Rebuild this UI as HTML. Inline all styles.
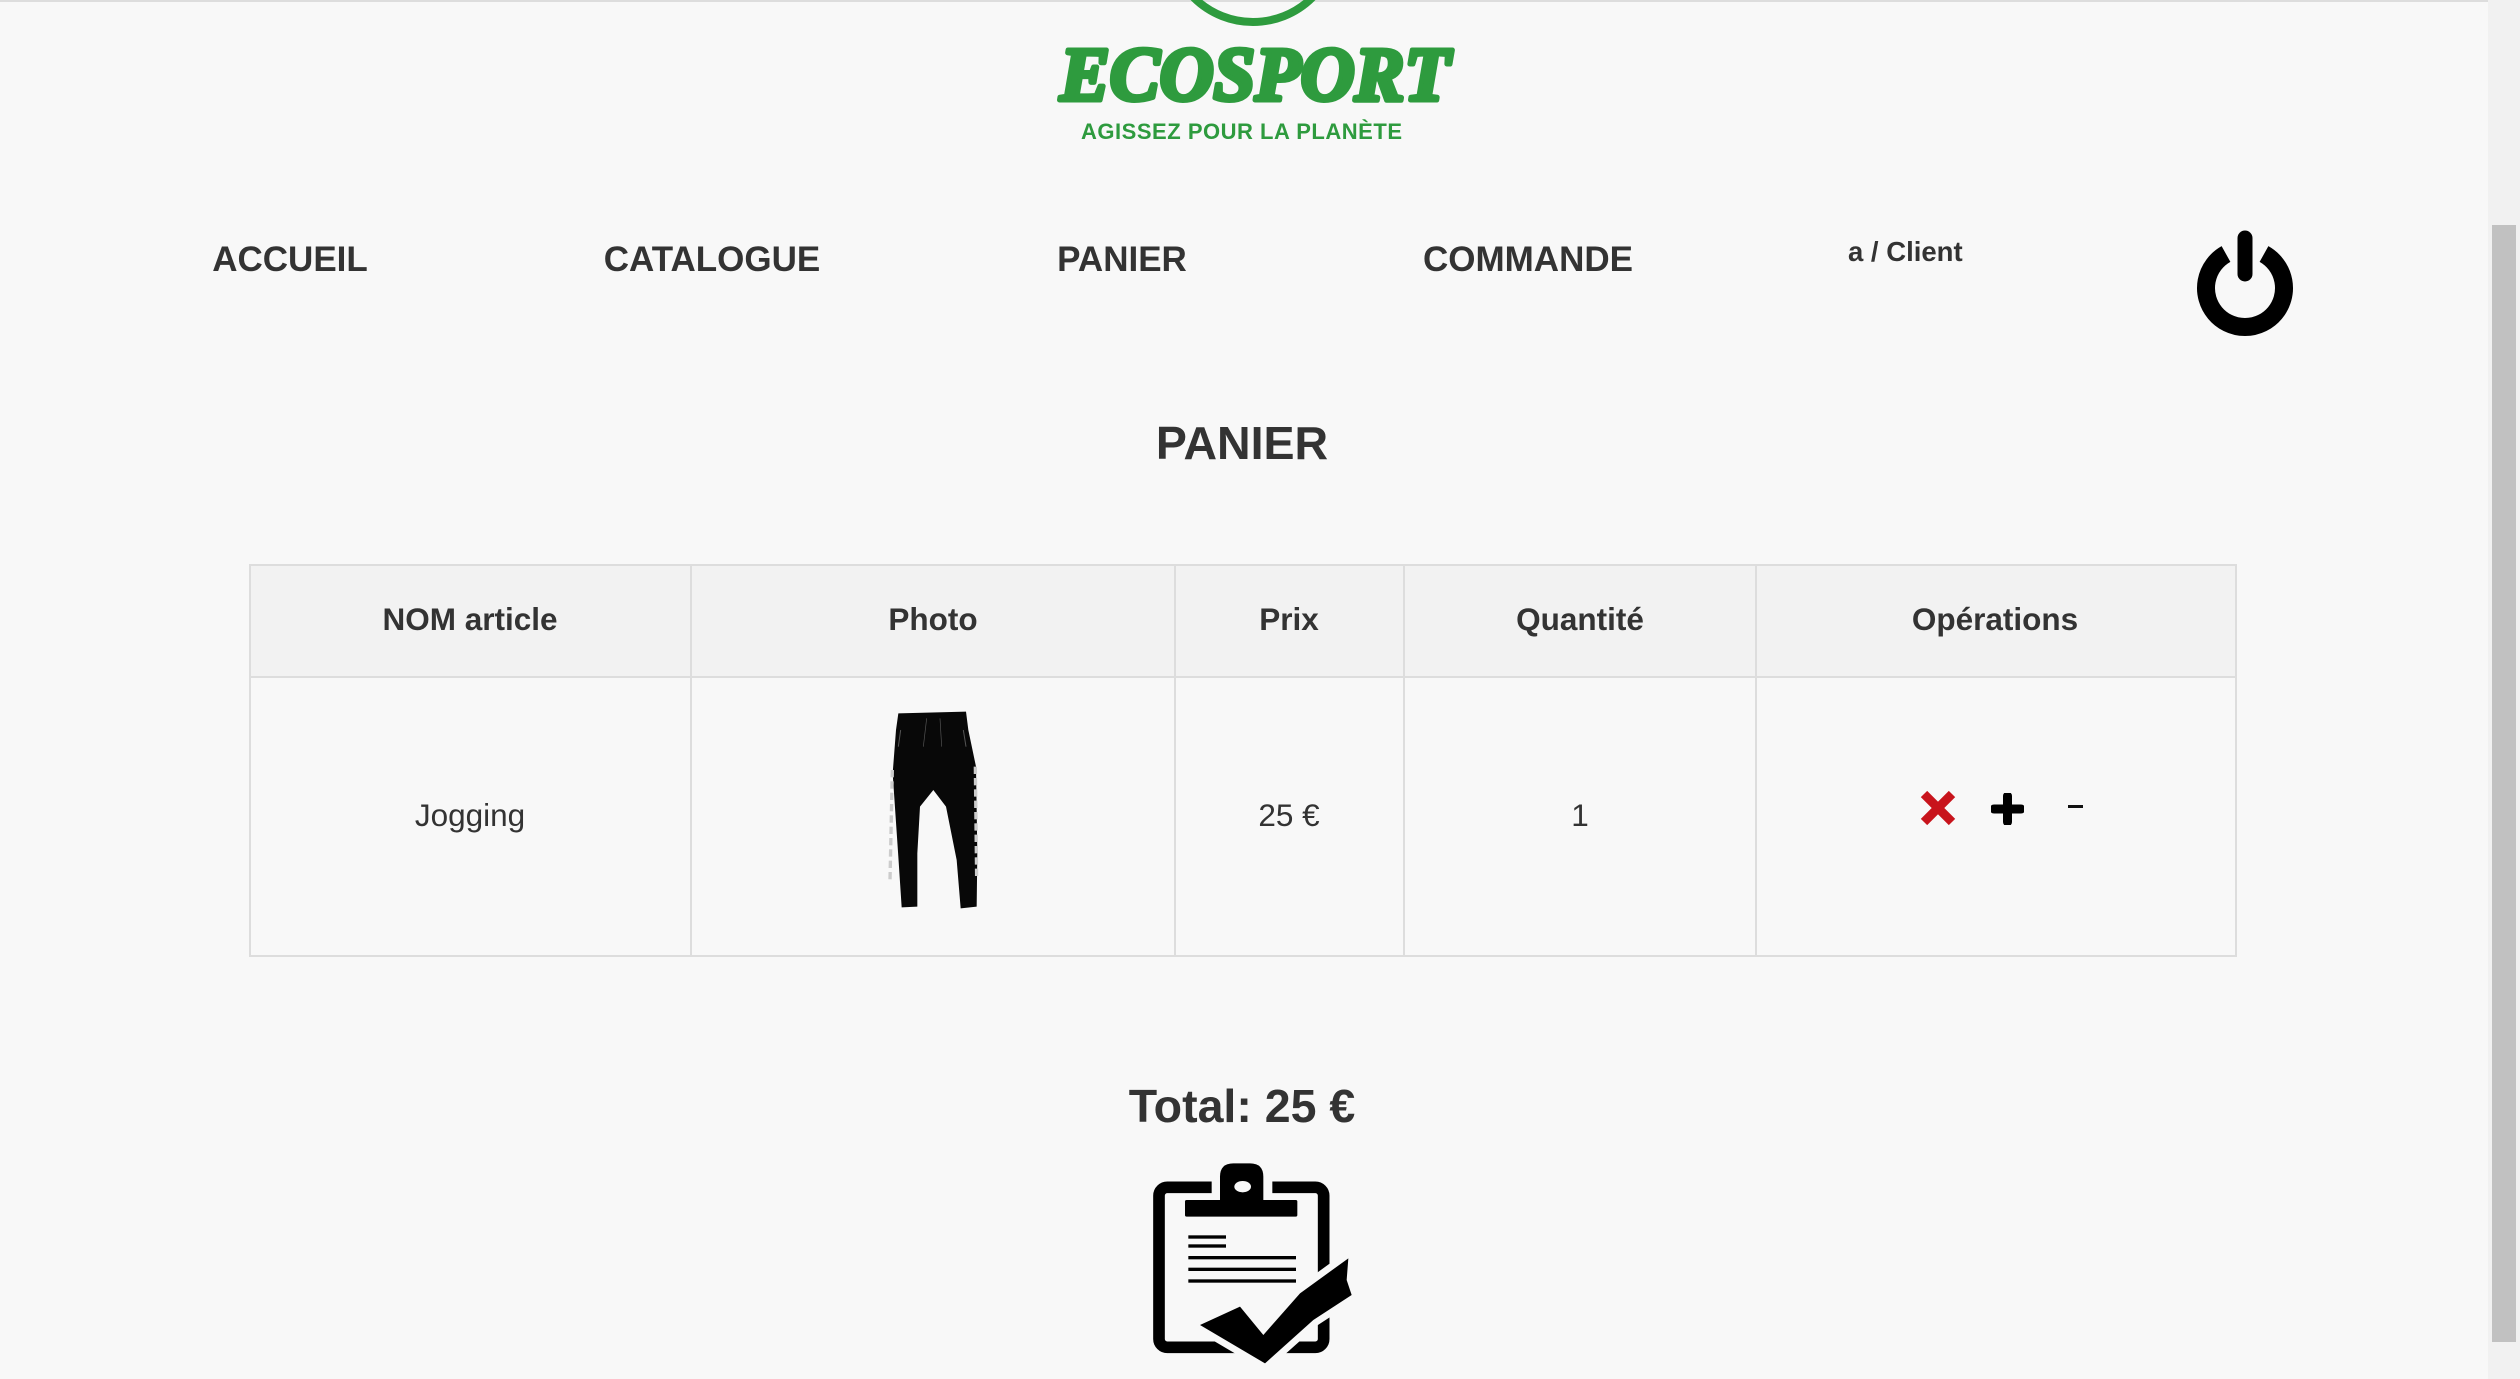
<!DOCTYPE html>
<html><head><meta charset="utf-8"><style>
html,body{margin:0;padding:0;width:2520px;height:1379px;overflow:hidden;background:#f8f8f8;font-family:"Liberation Sans",Arial,sans-serif;color:#333;}
.a{position:absolute;}
.t{position:absolute;text-align:center;white-space:nowrap;line-height:1;}
.nav{font-size:35px;font-weight:bold;}
.cell{position:absolute;box-sizing:border-box;border:2px solid #ddd;}
</style></head><body>
<div class="a" style="left:0;top:0;width:2488px;height:2px;background:#ddd"></div>
<svg class="a" style="left:0;top:0" width="2488" height="160">
<circle cx="1253" cy="-62" r="84" fill="none" stroke="#2e9b3e" stroke-width="8"/>
<text x="1060" y="100" textLength="390" lengthAdjust="spacingAndGlyphs" font-family="Liberation Serif" font-weight="bold" font-style="italic" font-size="76" fill="#2e9b3e" stroke="#2e9b3e" stroke-width="5" stroke-linejoin="round">ECOSPORT</text>
<text x="1081" y="139" textLength="321" lengthAdjust="spacing" font-family="Liberation Sans" font-weight="bold" font-size="22" fill="#2e9b3e">AGISSEZ POUR LA PLANÈTE</text>
</svg>
<div class="t nav" style="left:190px;width:200px;top:242px">ACCUEIL</div>
<div class="t nav" style="left:562px;width:300px;top:242px">CATALOGUE</div>
<div class="t nav" style="left:1022px;width:200px;top:242px">PANIER</div>
<div class="t nav" style="left:1378px;width:300px;top:242px">COMMANDE</div>
<div class="t" style="left:1848px;top:238px;font-size:27.5px;font-weight:bold;text-align:left">a / Client</div>
<svg class="a" style="left:2185px;top:222px" width="120" height="120" viewBox="0 0 120 120">
<path d="M41 32 A39 39 0 1 0 79 32" fill="none" stroke="#000" stroke-width="18"/>
<line x1="60" y1="16" x2="60" y2="52" stroke="#000" stroke-width="15" stroke-linecap="round"/>
</svg>
<div class="t" style="left:1042px;width:400px;top:420px;font-size:46.5px;font-weight:bold">PANIER</div>
<div class="a" style="left:249px;top:564px;width:1986px;height:113px;background:#f2f2f2"></div>
<div class="cell" style="left:249px;top:564px;width:1988px;height:393px"></div>
<div class="a" style="left:249px;top:676px;width:1988px;height:2px;background:#ddd"></div>
<div class="a" style="left:690px;top:564px;width:2px;height:393px;background:#ddd"></div>
<div class="a" style="left:1174px;top:564px;width:2px;height:393px;background:#ddd"></div>
<div class="a" style="left:1403px;top:564px;width:2px;height:393px;background:#ddd"></div>
<div class="a" style="left:1755px;top:564px;width:2px;height:393px;background:#ddd"></div>
<div class="t" style="left:320px;width:300px;top:604px;font-size:31.5px;font-weight:bold">NOM article</div>
<div class="t" style="left:783px;width:300px;top:604px;font-size:31.5px;font-weight:bold">Photo</div>
<div class="t" style="left:1189px;width:200px;top:604px;font-size:31.5px;font-weight:bold">Prix</div>
<div class="t" style="left:1430px;width:300px;top:604px;font-size:31.5px;font-weight:bold">Quantité</div>
<div class="t" style="left:1845px;width:300px;top:604px;font-size:31.5px;font-weight:bold">Opérations</div>
<div class="t" style="left:320px;width:300px;top:800px;font-size:31.5px">Jogging</div>
<div class="t" style="left:1189px;width:200px;top:800px;font-size:31.5px">25 €</div>
<div class="t" style="left:1480px;width:200px;top:800px;font-size:31.5px">1</div>
<svg class="a" style="left:840px;top:680px" width="180" height="240" viewBox="0 0 540 720">
<path d="M175 100 L378 95 L385 150 L408 260 L412 520 L410 680 L362 685 L350 540 L318 380 L280 330 L240 380 L232 520 L232 680 L185 682 L175 530 L158 280 L168 150 Z" fill="#080808"/>
<line x1="157" y1="270" x2="150" y2="600" stroke="#ccc" stroke-width="10" stroke-dasharray="22 12"/>
<line x1="406" y1="260" x2="410" y2="600" stroke="#ccc" stroke-width="10" stroke-dasharray="22 12"/>
<path d="M182 150 L175 200 M370 150 L378 200" stroke="#555" stroke-width="3"/>
<path d="M260 115 L250 200 M300 115 L305 200" stroke="#555" stroke-width="2"/>
</svg>
<svg class="a" style="left:1918px;top:788px" width="40" height="40" viewBox="0 0 40 40">
<path d="M6 6 L34 34 M34 6 L6 34" stroke="#c8141c" stroke-width="9"/>
</svg>
<svg class="a" style="left:1991px;top:793px" width="33" height="32" viewBox="0 0 33 32">
<path d="M16.5 3 V29 M3 16 H30" stroke="#000" stroke-width="9" stroke-linecap="round"/>
</svg>
<div class="a" style="left:2068px;top:805px;width:15px;height:3px;background:#111"></div>
<div class="t" style="left:1042px;width:400px;top:1083px;font-size:46.5px;font-weight:bold">Total: 25 €</div>
<svg class="a" style="left:1100px;top:1080px" width="300" height="299" viewBox="0 0 900 897">
<rect x="177" y="322" width="494" height="480" rx="25" fill="none" stroke="#000" stroke-width="35"/>
<rect x="335" y="295" width="182" height="55" fill="#f8f8f8"/>
<rect x="255" y="360" width="337" height="50" rx="5" fill="#000"/>
<path d="M360 360 V290 Q360 250 400 250 H450 Q490 250 490 290 V360 Z" fill="#000"/>
<ellipse cx="428" cy="320" rx="25" ry="17" fill="#f8f8f8"/>
<rect x="265" y="466" width="113" height="10" fill="#000"/>
<rect x="265" y="493" width="113" height="10" fill="#000"/>
<rect x="265" y="528" width="323" height="10" fill="#000"/>
<rect x="265" y="563" width="323" height="10" fill="#000"/>
<rect x="265" y="598" width="323" height="10" fill="#000"/>
<path d="M300 735 L420 680 L490 765 L600 640 L745 535 L740 600 L755 645 L640 720 L495 850 Z" fill="#000" stroke="#f8f8f8" stroke-width="40" stroke-linejoin="round"/>
<path d="M300 735 L420 680 L490 765 L600 640 L745 535 L740 600 L755 645 L640 720 L495 850 Z" fill="#000"/>
</svg>
<div class="a" style="left:2488px;top:0;width:32px;height:1379px;background:#f1f1f1"></div>
<div class="a" style="left:2492px;top:225px;width:24px;height:1117px;background:#c1c1c1"></div>
</body></html>
